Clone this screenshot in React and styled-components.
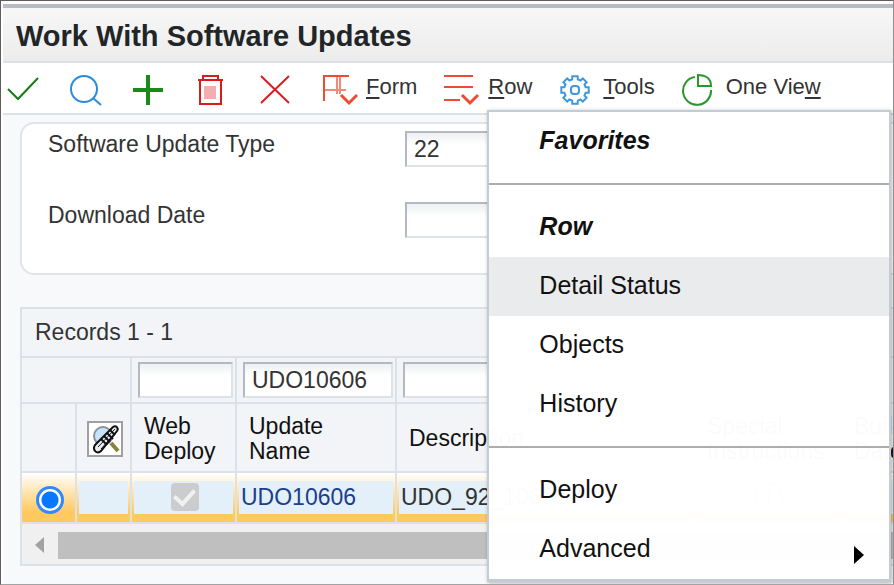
import React from 'react';
import styled, { createGlobalStyle, css } from 'styled-components';

const Global = createGlobalStyle`
  * { box-sizing: border-box; }
  html { overflow: hidden; }
  body { margin: 0; background: #fff; font-family: "Liberation Sans", Arial, sans-serif; font-size: 23px; color: #333; }
  button, input { font: inherit; color: inherit; margin: 0; }
`;

const Page = styled.div`
  display: flex;
  flex-direction: column;
  min-height: 100vh;
  padding: 3px 0 0 2px;
  border: 1px solid #5f5b5e;
  border-right-color: #8f8f8f;
  border-bottom-color: #a3a3a3;
  overflow: hidden;
`;

const TitleBar = styled.header`
  height: 59px;
  border-top: 4px solid #b7bcc4;
  border-bottom: 2px solid #dbe2e7;
  background: linear-gradient(#f7f7f7, #ececec);
  padding: 0 13px;
  flex: none;
`;

const Title = styled.h1`
  margin: 0;
  font-size: 29px;
  line-height: 56px;
  font-weight: bold;
  color: #222527;
  white-space: nowrap;
`;

const Toolbar = styled.div`
  position: relative;
  z-index: 2;
  display: flex;
  align-items: flex-start;
  height: 52px;
  border-bottom: 2px solid #dde2e6;
  background: #fff;
  padding: 9px 0 0 3px;
  flex: none;
`;

const ToolButton = styled.button`
  border: 0;
  background: none;
  padding: 0;
  width: 36px;
  height: 36px;
  margin-right: ${(p) => (p.$last ? 28 : 27)}px;
  flex: none;
  svg { display: block; }
`;

const ExitButton = styled.button`
  display: flex;
  align-items: flex-start;
  gap: 8px;
  border: 0;
  background: none;
  padding: 0;
  margin-right: 27px;
  font-size: 22px;
  line-height: 30px;
  white-space: nowrap;
  flex: none;
  svg { display: block; flex: none; }
  u { text-decoration-thickness: 2px; text-underline-offset: 3px; }
`;

const MenuAnchor = styled.div`
  position: relative;
  display: flex;
`;

const Menu = styled.div`
  position: absolute;
  top: 38px;
  left: 43px;
  width: 404px;
  border: 2px solid #c3ccd5;
  border-bottom-width: 3px;
  background: rgba(255, 255, 255, 0.985);
  box-shadow: 1px 1px 4px rgba(0, 0, 0, 0.3);
  font-size: 25px;
  color: #111;
`;

const Group = styled.div`
  padding-bottom: ${(p) => (p.$pad ? 12 : 0)}px;
  & + & { border-top: 2px solid #adadad; padding-top: 13px; }
`;

const GroupTitle = styled.div`
  height: 59px;
  line-height: 57px;
  padding-left: 50px;
  font-weight: bold;
  font-style: italic;
`;

const MenuItem = styled.button`
  display: flex;
  align-items: flex-start;
  justify-content: space-between;
  width: 100%;
  height: 59px;
  border: 0;
  padding: 0 25px 0 50px;
  background: ${(p) => (p.$active ? '#eaebed' : 'transparent')};
  line-height: 56px;
  text-align: left;
  svg { margin-top: 26px; }
`;

const Content = styled.main`
  flex: 1;
  background: #f8f9fb;
  padding: 7px 0 17px 17px;
`;

const Card = styled.form`
  height: 153px;
  margin-bottom: 32px;
  border: 2px solid #e1e5e9;
  border-right: 0;
  border-radius: 14px 0 0 14px;
  background: #fff;
  padding: 7px 0 0 26px;
`;

const Field = styled.div`
  display: grid;
  grid-template-columns: 357px 160px 1fr;
  height: 71px;
  white-space: nowrap;
`;

const Label = styled.label`
  line-height: 27px;
`;

const TextBox = styled.input`
  width: 100%;
  min-width: 0;
  height: 36px;
  border: 2px solid #b3b8c3;
  border-right-color: #dde2e8;
  border-bottom-color: #dde2e8;
  border-radius: 0;
  background: linear-gradient(#eef0f1, #fff 12px);
  padding: 1px 7px 0;
  outline: 0;
`;

const GridPanel = styled.section`
  border: 2px solid #dae2e8;
  border-right: 0;
  overflow: hidden;
  background: #f2f4f8;
`;

const Records = styled.div`
  height: 47px;
  line-height: 46px;
  padding-left: 13px;
`;

const Table = styled.table`
  width: 1000px;
  table-layout: fixed;
  border-collapse: separate;
  border-spacing: 0;
`;

const line = css`
  border-right: 2px solid #dae2e8;
  border-top: 2px solid #dae2e8;
`;

const FilterCell = styled.td`
  ${line}
  height: 46px;
  padding: 0 2px 0 6px;
`;

const HeadCell = styled.th`
  ${line}
  height: 69px;
  padding: 2px 12px 0;
  font-weight: normal;
  line-height: 25px;
  text-align: left;
  color: #111;
`;

const DataCell = styled.td`
  ${line}
  height: 51px;
  padding: ${(p) => (p.$flush ? '0' : '8px 2px')};
  background: linear-gradient(#fff, #ffc95f 80%);
`;

const CellValue = styled.div`
  display: flex;
  align-items: center;
  justify-content: ${(p) => (p.$center ? 'center' : 'flex-start')};
  height: 33px;
  line-height: 30px;
  padding: 0 0 2px 2px;
  background: #e3f0fa;
  color: ${(p) => (p.$link ? '#1b3f8c' : '#333')};
  white-space: nowrap;
`;

const Radio = styled.input`
  appearance: none;
  display: block;
  width: 28px;
  height: 28px;
  margin: 4px 0 0 14px;
  border: 3px solid #3388ff;
  border-radius: 50%;
  background: radial-gradient(circle, #0877ff 8px, #fff 9px);
`;

const Tick = styled.input`
  appearance: none;
  width: 28px;
  height: 28px;
  border-radius: 4px;
  background: #cbcccd;
  display: grid;
  place-items: center;
  &::before {
    content: "";
    width: 9px;
    height: 16px;
    border: solid #f1f1f1;
    border-width: 0 4px 4px 0;
    transform: translateY(-2px) rotate(42deg);
  }
`;

const Attach = styled.button`
  display: block;
  width: 36px;
  height: 36px;
  padding: 0;
  border: 2px solid #a0a0a0;
  background: #fff;
`;

const AttachHead = styled(HeadCell)`
  padding: 2px 0 0 10px;
`;

const Scroll = styled.div`
  display: flex;
  align-items: center;
  height: 42px;
  padding-top: 2px;
  background: #f0f0f1;
  border-top: 2px solid #dae2e8;
`;

const Arrow = styled.button`
  width: 36px;
  border: 0;
  padding: 0 0 0 13px;
  background: none;
  svg { display: block; }
`;

const Thumb = styled.div`
  flex: 1;
  height: 27px;
  background: #bfbfbf;
`;

function Icon({ color, w = 2, children }) {
  return (
    <svg width="36" height="36" viewBox="0 0 36 36" fill="none" stroke={color} strokeWidth={w} aria-hidden="true">
      {children}
    </svg>
  );
}

/* Outline of a gear with eight teeth. */
function gearPath(cx, cy, outer, inner) {
  const points = [];
  for (let i = 0; i < 8; i += 1) {
    [[-15, inner], [-11, outer], [11, outer], [15, inner]].forEach(([offset, r]) => {
      const a = ((i * 45 + offset) * Math.PI) / 180;
      points.push(`${(cx + r * Math.cos(a)).toFixed(1)} ${(cy + r * Math.sin(a)).toFixed(1)}`);
    });
  }
  return `M${points.join('L')}Z`;
}

export default function App() {
  return (
    <>
      <Global />
      <Page>
        <TitleBar><Title>Work With Software Updates</Title></TitleBar>
        <Toolbar role="toolbar">
          <ToolButton aria-label="Select">
            <Icon color="#157d18"><path d="M2 17l10 10L32 6" /></Icon>
          </ToolButton>
          <ToolButton aria-label="Find">
            <Icon color="#2a8bdc"><circle cx="15" cy="17" r="13" /><path d="M24 26l8 7" /></Icon>
          </ToolButton>
          <ToolButton aria-label="Add">
            <Icon color="#178c1b" w={4}><path d="M1 18h30M16 3v30" /></Icon>
          </ToolButton>
          <ToolButton aria-label="Delete">
            <Icon color="#d91b1b">
              <path d="M3 8h25M8 7V4h15v3M5 9v23h21V9" />
              <path d="M10 14v13M12 14v13M14 14v13M16 14v13M18 14v13M20 14v13" strokeWidth="1" opacity=".7" />
            </Icon>
          </ToolButton>
          <ToolButton aria-label="Close" $last>
            <Icon color="#df1c1c"><path d="M3 4l28 27M31 4L3 31" /></Icon>
          </ToolButton>
          <ExitButton>
            <Icon color="#ef4a32">
              <path d="M2 29V4h25" />
              <path d="M3 18h21M15 5v17M18 5v17" opacity=".65" />
              <path d="M19 23l8 8 8-8" strokeWidth="3" />
            </Icon>
            <span><u>F</u>orm</span>
          </ExitButton>
          <MenuAnchor>
            <ExitButton aria-expanded="true">
              <Icon color="#ef4a32">
                <path d="M0 4h29M0 15h29M0 28h16" /><path d="M18 23l8 8 8-8" strokeWidth="3" />
              </Icon>
              <span><u>R</u>ow</span>
            </ExitButton>
            <Menu role="menu">
              <Group $pad><GroupTitle>Favorites</GroupTitle></Group>
              <Group $pad>
                <GroupTitle>Row</GroupTitle>
                <MenuItem role="menuitem" $active>Detail Status</MenuItem>
                <MenuItem role="menuitem">Objects</MenuItem>
                <MenuItem role="menuitem">History</MenuItem>
              </Group>
              <Group>
                <MenuItem role="menuitem">Deploy</MenuItem>
                <MenuItem role="menuitem">
                  Advanced
                  <svg width="10" height="18" aria-hidden="true"><path d="M0 0l10 9-10 9z" fill="#000" /></svg>
                </MenuItem>
              </Group>
            </Menu>
          </MenuAnchor>
          <ExitButton>
            <Icon color="#3f98dc"><path d={gearPath(16, 18, 14, 11)} /><rect x="12" y="14" width="8" height="8" rx="3" /></Icon>
            <span><u>T</u>ools</span>
          </ExitButton>
          <ExitButton>
            <Icon color="#2c962e">
              <path d="M13 5A14 14 0 1 0 29 18" /><path d="M16 3v11h13C29 7 24 3 16 3z" />
            </Icon>
            <span>One Vie<u>w</u></span>
          </ExitButton>
        </Toolbar>
        <Content>
          <Card>
            <Field><Label htmlFor="type">Software Update Type</Label><TextBox id="type" defaultValue="22" /></Field>
            <Field><Label htmlFor="date">Download Date</Label><TextBox id="date" /></Field>
          </Card>
          <GridPanel>
            <Records>Records 1 - 1</Records>
            <Table>
              <colgroup>
                <col style={{ width: 55 }} /><col style={{ width: 55 }} /><col style={{ width: 105 }} />
                <col style={{ width: 160 }} /><col style={{ width: 298 }} /><col style={{ width: 147 }} /><col />
              </colgroup>
              <thead>
                <tr>
                  <FilterCell colSpan={2} />
                  <FilterCell><TextBox aria-label="Filter Web Deploy" /></FilterCell>
                  <FilterCell><TextBox aria-label="Filter Update Name" defaultValue="UDO10606" /></FilterCell>
                  <FilterCell><TextBox aria-label="Filter Description" /></FilterCell>
                  <FilterCell /><FilterCell />
                </tr>
                <tr>
                  <HeadCell />
                  <AttachHead>
                    <Attach aria-label="Attachments">
                      <svg width="32" height="32" viewBox="0 0 32 32" fill="none" aria-hidden="true">
                        <circle cx="14" cy="13" r="9" fill="#c6e3fb" stroke="#8a9298" strokeWidth="2" />
                        <path d="M22 20l7 8" stroke="#8b8138" strokeWidth="4" />
                        <path d="M6 22L24 4c3-2 6 1 4 4L12 28c-4 4-9-1-6-6z" fill="#e9eef2" stroke="#111" strokeWidth="2" />
                        <path d="M9 24L26 6M12 26L27 9" stroke="#111" strokeWidth="1" />
                        <path d="M12 16l6 6M15 13l6 6M18 10l6 6M21 7l5 5" stroke="#111" strokeWidth="2" />
                      </svg>
                    </Attach>
                  </AttachHead>
                  <HeadCell>Web Deploy</HeadCell>
                  <HeadCell>Update<br />Name</HeadCell>
                  <HeadCell>Description</HeadCell>
                  <HeadCell>Special Instructions</HeadCell>
                  <HeadCell>Build<br />Date</HeadCell>
                </tr>
              </thead>
              <tbody>
                <tr>
                  <DataCell $flush><Radio type="radio" name="row" aria-label="Select row" defaultChecked /></DataCell>
                  <DataCell><CellValue /></DataCell>
                  <DataCell><CellValue $center><Tick type="checkbox" aria-label="Web Deploy" defaultChecked disabled /></CellValue></DataCell>
                  <DataCell><CellValue $link>UDO10606</CellValue></DataCell>
                  <DataCell><CellValue>UDO_92_10606</CellValue></DataCell>
                  <DataCell>
                    <CellValue $center>
                      <svg width="30" height="30" viewBox="0 0 30 30" fill="none" stroke="#2a8bdc" strokeWidth="2" aria-hidden="true">
                        <circle cx="15" cy="15" r="13" /><path d="M15 8v3M15 13v9" />
                      </svg>
                    </CellValue>
                  </DataCell>
                  <DataCell><CellValue /></DataCell>
                </tr>
              </tbody>
            </Table>
            <Scroll>
              <Arrow aria-label="Scroll left">
                <svg width="9" height="16" aria-hidden="true"><path d="M9 0v16L0 8z" fill="#a2a2a2" /></svg>
              </Arrow>
              <Thumb />
            </Scroll>
          </GridPanel>
        </Content>
      </Page>
    </>
  );
}
